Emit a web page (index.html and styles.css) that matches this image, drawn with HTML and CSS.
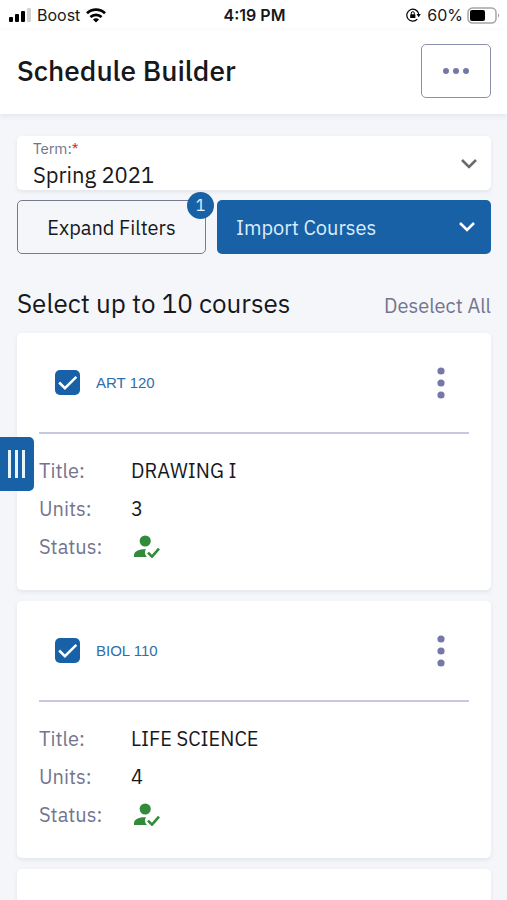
FILE: index.html
```html
<!DOCTYPE html>
<html lang="en">
<head>
<meta charset="utf-8">
<meta name="viewport" content="width=device-width, initial-scale=1">
<title>Schedule Builder</title>
<link rel="stylesheet" href="styles.css">
</head>
<body>
<div class="app">
  <div class="status-bar">
    <div class="status-left">
      <svg width="22" height="14" viewBox="0 0 22 14" aria-hidden="true">
        <rect x="0" y="9" width="4" height="5" rx="1"/>
        <rect x="6" y="6" width="4" height="8" rx="1"/>
        <rect x="12" y="3" width="4" height="11" rx="1"/>
        <rect x="18" y="0" width="4" height="14" rx="1" fill="#d3d3d3"/>
      </svg>
      <span>Boost</span>
      <svg width="20" height="15" viewBox="0 0 20 15" fill="none" stroke="#000" stroke-width="2.7" aria-hidden="true">
        <path d="M1 5.3a13 13 0 0 1 18 0"/>
        <path d="M4.4 9a8.2 8.2 0 0 1 11.2 0"/>
        <path d="M10 14.6 6.9 11.6a4.5 4.5 0 0 1 6.2 0z" fill="#000" stroke="none"/>
      </svg>
    </div>
    <span class="clock">4:19 PM</span>
    <div class="status-right">
      <svg width="15" height="14" viewBox="0 0 15 14" fill="none" stroke="#000" aria-hidden="true">
        <path d="M11.3 11.2A6 6 0 1 1 12.7 6" stroke-width="1.2"/>
        <path d="M10.6 6h4.2l-2.1 3.2z" fill="#000" stroke="none"/>
        <rect x="4.2" y="6.3" width="5.2" height="3.800" rx="0.6" fill="#000" stroke="none"/>
        <path d="M5.3 6.500V5.200a1.500 1.500 0 0 1 3 0v1.300" stroke-width="1"/>
      </svg>
      <span class="battery">60%
        <svg width="33" height="17" viewBox="0 0 33 17" aria-hidden="true">
          <rect x="1" y="1" width="28" height="15" rx="4.5" fill="#fff" stroke="#a5a5a5" stroke-width="1.5"/>
          <rect x="3" y="3" width="15" height="11" rx="2"/>
          <path d="M31 6.5v4c1.7-.6 1.7-3.4 0-4z" fill="#a5a5a5"/>
        </svg>
      </span>
    </div>
  </div>

  <header class="header">
    <h1>Schedule Builder</h1>
    <button class="more" type="button" aria-label="More options">
      <svg width="28" height="8" viewBox="0 0 28 8" fill="#7577a6" aria-hidden="true"><circle cx="4" cy="4" r="3"/><circle cx="14" cy="4" r="3"/><circle cx="24" cy="4" r="3"/></svg>
    </button>
  </header>

  <main class="content">
    <div class="term">
      <label for="term">Term:<span class="required">*</span></label>
      <select id="term"><option>Spring 2021</option></select>
      <svg class="term-arrow" width="18" height="12" viewBox="0 0 18 12" fill="none" stroke="#6b6b6b" stroke-width="2.6" aria-hidden="true"><path d="m2 2 7 7 7-7"/></svg>
    </div>

    <div class="actions">
      <button class="filters" type="button">Expand Filters<span class="badge">1</span></button>
      <button class="import" type="button"><span>Import Courses</span>
        <svg width="18" height="12" viewBox="0 0 18 12" fill="none" stroke="#fff" stroke-width="2.6" aria-hidden="true"><path d="m2 2 7 7 7-7"/></svg>
      </button>
    </div>

    <div class="list-head">
      <h2>Select up to 10 courses</h2>
      <button class="deselect" type="button">Deselect All</button>
    </div>

    <div class="courses">
      <article class="card">
        <div class="card-head">
          <input type="checkbox" id="art120" checked>
          <label for="art120">ART 120</label>
          <button class="menu" type="button" aria-label="ART 120 options">
            <svg width="8" height="32" viewBox="0 0 8 32" fill="#7577a6" aria-hidden="true"><circle cx="4" cy="4" r="3.6"/><circle cx="4" cy="16" r="3.6"/><circle cx="4" cy="28" r="3.6"/></svg>
          </button>
        </div>
        <dl>
          <dt>Title:</dt><dd>DRAWING I</dd>
          <dt>Units:</dt><dd>3</dd>
          <dt>Status:</dt>
          <dd><svg class="enrolled" width="26" height="23" viewBox="0 0 26 23" role="img" aria-label="Enrolled"><circle cx="11.2" cy="6" r="5.6"/><path d="M0 22v-2C0 16.400 5 13.700 12 14.200c-1.600 2.300-1.500 5.300.8 7.800z"/><path d="m14 17.600 4 4 7-8" fill="none" stroke="#328a3b" stroke-width="2.600"/></svg></dd>
        </dl>
      </article>

      <article class="card">
        <div class="card-head">
          <input type="checkbox" id="biol110" checked>
          <label for="biol110">BIOL 110</label>
          <button class="menu" type="button" aria-label="BIOL 110 options">
            <svg width="8" height="32" viewBox="0 0 8 32" fill="#7577a6" aria-hidden="true"><circle cx="4" cy="4" r="3.6"/><circle cx="4" cy="16" r="3.6"/><circle cx="4" cy="28" r="3.6"/></svg>
          </button>
        </div>
        <dl>
          <dt>Title:</dt><dd>LIFE SCIENCE</dd>
          <dt>Units:</dt><dd>4</dd>
          <dt>Status:</dt>
          <dd><svg class="enrolled" width="26" height="23" viewBox="0 0 26 23" role="img" aria-label="Enrolled"><circle cx="11.2" cy="6" r="5.6"/><path d="M0 22v-2C0 16.400 5 13.700 12 14.200c-1.600 2.300-1.500 5.300.8 7.800z"/><path d="m14 17.600 4 4 7-8" fill="none" stroke="#328a3b" stroke-width="2.600"/></svg></dd>
        </dl>
      </article>

      <article class="card card-next"></article>
    </div>
  </main>

  <button class="drawer" type="button" aria-label="Open drawer">
    <svg width="18" height="28" viewBox="0 0 18 28" fill="#e8f3fc" aria-hidden="true"><rect x="0" width="3" height="28"/><rect x="7" width="3" height="28"/><rect x="14" width="3" height="28"/></svg>
  </button>
</div>
</body>
</html>
```

FILE: styles.css
```css
* { box-sizing: border-box; }

body {
  margin: 0;
  background: #f4f6fa;
  color: #17181c;
  font-family: "IBM Plex Sans", "Noto Sans", sans-serif;
  font-size: 20px;
}

button, select { font: inherit; color: inherit; margin: 0; cursor: pointer; }
svg { display: block; flex: none; }
h1, h2, dl, dd { margin: 0; }

.app {
  position: relative;
  display: flex;
  flex-direction: column;
  height: 100vh;
  overflow: hidden;
}

.status-bar {
  display: grid;
  grid-template-columns: 1fr auto 1fr;
  align-items: center;
  flex: none;
  height: 30px;
  padding: 0 7px 0 9px;
  background: #fff;
  font: 16px/20px Inter, sans-serif;
}
.status-left, .status-right { display: flex; align-items: center; gap: 6px; }
.status-right { justify-content: flex-end; }
.battery { display: flex; align-items: center; gap: 4px; }
.clock { font-weight: 600; }

.header {
  display: flex;
  align-items: center;
  justify-content: space-between;
  flex: none;
  height: 84px;
  padding: 0 16px 2px 17px;
  background: #fff;
  box-shadow: 0 2px 5px #e2e5ec;
}
.header h1 { font-size: 28px; line-height: 36px; font-weight: 500; }
.more {
  display: flex;
  align-items: center;
  justify-content: center;
  width: 70px;
  height: 54px;
  padding: 0;
  background: #fff;
  border: 1px solid #8c8eae;
  border-radius: 5px;
}

.content { padding: 22px 16px 0 17px; }

.term {
  position: relative;
  height: 54px;
  padding: 4px 0 0 16px;
  background: #fff;
  border-radius: 5px;
  box-shadow: 0 2px 4px #e2e4e9;
}
.term label { display: block; font-size: 15px; line-height: 18px; color: #70738a; }
.required { color: #d02c32; }
.term select {
  display: block;
  width: 100%;
  height: 32px;
  padding: 0;
  background: transparent;
  border: 0;
  appearance: none;
  font-size: 22px;
}
.term-arrow { position: absolute; right: 13px; top: 22px; pointer-events: none; }

.actions {
  display: grid;
  grid-template-columns: 189fr 274fr;
  gap: 11px;
  margin-top: 10px;
}
.actions button { height: 54px; border-radius: 5px; }
.filters {
  position: relative;
  padding: 0;
  background: transparent;
  border: 1px solid #777b8d;
}
.badge {
  position: absolute;
  top: -9px;
  right: -9px;
  width: 27px;
  height: 27px;
  border-radius: 50%;
  background: #1961a6;
  color: #e8f3fc;
  font-size: 16px;
  line-height: 27px;
}
.import {
  display: flex;
  align-items: center;
  justify-content: space-between;
  padding: 0 15px 0 19px;
  background: #1961a6;
  border: 0;
}
.import span { color: #dcecfa; }

.list-head {
  display: flex;
  align-items: baseline;
  justify-content: space-between;
  margin-top: 30px;
}
.list-head h2 { font-size: 26px; line-height: 38px; font-weight: 400; }
.deselect { padding: 0; background: none; border: 0; color: #73758f; }

.courses { display: flex; flex-direction: column; gap: 11px; margin-top: 11px; }
.card {
  padding: 0 22px 25px;
  background: #fff;
  border-radius: 5px;
  box-shadow: 0 2px 4px #e2e4e9;
}
.card-next { min-height: 100px; }
.card-head {
  display: flex;
  align-items: center;
  height: 101px;
  padding: 0 16px;
  border-bottom: 2px solid #c8c8de;
}
.card-head input {
  appearance: none;
  width: 25px;
  height: 25px;
  margin: 0 16px 0 0;
  border: 0;
  border-radius: 5px;
  box-shadow: inset 0 0 0 2px #1961a6;
}
.card-head input:checked {
  background: #1961a6 url("data:image/svg+xml,%3Csvg xmlns='http://www.w3.org/2000/svg' viewBox='0 0 24 24' fill='none' stroke='white' stroke-width='2.4'%3E%3Cpath d='m4 12 5.5 5.5L20.5 6.5'/%3E%3C/svg%3E") center / contain no-repeat;
  box-shadow: none;
}
.card-head label { color: #2c6fab; font: 15px/20px "Liberation Sans", sans-serif; }
.menu {
  display: flex;
  align-items: center;
  justify-content: center;
  width: 24px;
  height: 41px;
  margin-left: auto;
  padding: 0;
  background: none;
  border: 0;
}

dl {
  display: grid;
  grid-template-columns: 92px 1fr;
  grid-auto-rows: 38px;
  align-items: center;
  padding-top: 17px;
}
dt { color: #73758f; }
.enrolled { margin-left: 3px; fill: #328a3b; }

.drawer {
  position: absolute;
  left: 0;
  top: 437px;
  display: flex;
  align-items: center;
  width: 34px;
  height: 54px;
  padding: 0 0 0 8px;
  background: #1961a6;
  border: 0;
  border-radius: 0 5px 5px 0;
}
```
